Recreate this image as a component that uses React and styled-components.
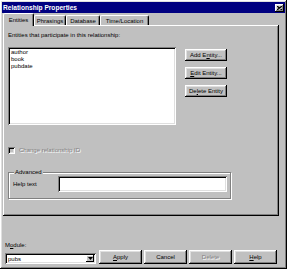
import React from 'react'
import styled, { createGlobalStyle } from 'styled-components'

const GlobalStyle = createGlobalStyle`
  html, body {
    margin: 0;
    padding: 0;
    background: #c0c0c0;
  }
  body {
    font-family: "Liberation Sans", Arial, sans-serif;
    font-size: 6px;
    color: #000;
  }
`

const raised = `
  box-shadow: inset -1px -1px #000, inset 1px 1px #fff,
    inset -2px -2px #808080, inset 2px 2px #dfdfdf;
`

const sunken = `
  box-shadow: inset 1px 1px #808080, inset -1px -1px #fff,
    inset 2px 2px #000, inset -2px -2px #dfdfdf;
`

const Window = styled.div`
  width: 287px;
  height: 269px;
  box-sizing: border-box;
  padding: 2px;
  background: #c0c0c0;
  display: flex;
  flex-direction: column;
  ${raised}
`

const TitleBar = styled.div`
  height: 11px;
  display: flex;
  align-items: center;
  justify-content: space-between;
  padding: 0 1px 0 1px;
  background: #000080;
  color: #fff;
  font-weight: bold;
  font-size: 6.6px;
`

const CloseBox = styled.div`
  width: 9px;
  height: 8px;
  box-sizing: border-box;
  background: #c0c0c0;
  display: flex;
  align-items: center;
  justify-content: center;
  ${raised}
`

const Body = styled.div`
  flex: 1;
  display: flex;
  flex-direction: column;
  padding: 0 0 3px 1px;
`

const TabRow = styled.div`
  height: 13px;
  display: flex;
  align-items: flex-end;
  position: relative;
  z-index: 1;
  margin-bottom: -1px;
`

const Tab = styled.div`
  width: ${p => p.width}px;
  height: ${p => (p.active ? 13 : 10)}px;
  margin-bottom: ${p => (p.active ? 0 : 1)}px;
  box-sizing: border-box;
  display: flex;
  align-items: center;
  justify-content: center;
  background: #c0c0c0;
  border-top: 1px solid #fff;
  border-left: 1px solid #fff;
  border-right: 1px solid #000;
  border-radius: 2px 2px 0 0;
  box-shadow: inset -1px 0 #808080;
  position: relative;
  z-index: ${p => (p.active ? 2 : 1)};
`

const Panel = styled.div`
  width: 276px;
  height: 191px;
  box-sizing: border-box;
  padding: 6px 5px;
  background: #c0c0c0;
  display: flex;
  flex-direction: column;
  box-shadow: inset -1px -1px #000, inset 1px 1px #fff, inset -2px -2px #808080;
`

const Prompt = styled.div`
  line-height: 9px;
  margin-bottom: 7px;
`

const ListRow = styled.div`
  display: flex;
`

const ListBox = styled.div`
  width: 168px;
  height: 78px;
  box-sizing: border-box;
  padding: 2px 3px;
  background: #fff;
  line-height: 7px;
  ${sunken}
`

const ButtonColumn = styled.div`
  display: flex;
  flex-direction: column;
  gap: 6px;
  margin-left: 9px;
  padding-top: 2px;
`

const Button = styled.div`
  width: ${p => p.width || 42}px;
  height: ${p => p.height || 12}px;
  box-sizing: border-box;
  display: flex;
  align-items: center;
  justify-content: center;
  background: #c0c0c0;
  color: ${p => (p.disabled ? '#808080' : '#000')};
  text-shadow: ${p => (p.disabled ? '1px 1px 0 #fff' : 'none')};
  ${raised}
`

const CheckRow = styled.div`
  display: flex;
  align-items: center;
  margin-top: 21px;
  height: 8px;
`

const CheckBox = styled.div`
  width: 7px;
  height: 7px;
  box-sizing: border-box;
  background: #c0c0c0;
  ${sunken}
`

const DisabledText = styled.span`
  margin-left: 4px;
  color: #808080;
  text-shadow: 1px 1px 0 #fff;
`

const Group = styled.fieldset`
  width: 223px;
  height: 30px;
  box-sizing: border-box;
  margin: 15px 0 0 0;
  padding: 0 3px 4px 4px;
  border: 1px solid #808080;
  box-shadow: inset 1px 1px #fff, 1px 1px #fff;
  display: flex;
  align-items: center;
`

const Legend = styled.legend`
  padding: 0 1px;
  margin-left: 1px;
  line-height: 7px;
  background: #c0c0c0;
`

const Label = styled.span`
  flex: 1;
`

const TextField = styled.div`
  width: 169px;
  height: 16px;
  box-sizing: border-box;
  background: #fff;
  ${sunken}
`

const Footer = styled.div`
  margin-top: auto;
  display: flex;
  flex-direction: column;
  padding-left: 2px;
`

const FooterLabel = styled.div`
  line-height: 8px;
  margin-bottom: 1px;
`

const FooterRow = styled.div`
  display: flex;
  align-items: flex-end;
`

const Select = styled.div`
  width: 91px;
  height: 11px;
  box-sizing: border-box;
  padding: 2px;
  background: #fff;
  display: flex;
  align-items: center;
  justify-content: space-between;
  ${sunken}
`

const SelectText = styled.span`
  padding-left: 1px;
`

const DropButton = styled.div`
  width: 8px;
  height: 7px;
  box-sizing: border-box;
  background: #c0c0c0;
  display: flex;
  align-items: center;
  justify-content: center;
  box-shadow: inset -1px -1px #000, inset 1px 1px #fff;
`

const ButtonBar = styled.div`
  display: flex;
  gap: 2px;
  margin-left: 3px;
`

const tabs = [
  { label: 'Entities', width: 31, active: true },
  { label: 'Phrasings', width: 32 },
  { label: 'Database', width: 34 },
  { label: 'Time/Location', width: 49 },
]

const entities = ['author', 'book', 'pubdate']

const App = () => {
  return (
    <>
      <GlobalStyle />
      <Window>
        <TitleBar>
          <span>Relationship Properties</span>
          <CloseBox>
            <svg width="5" height="4" viewBox="0 0 5 4">
              <path d="M0 0 L5 4 M5 0 L0 4" stroke="#000" strokeWidth="1.2" />
            </svg>
          </CloseBox>
        </TitleBar>
        <Body>
          <TabRow>
            {tabs.map(t => (
              <Tab key={t.label} width={t.width} active={t.active}>
                {t.label}
              </Tab>
            ))}
          </TabRow>
          <Panel>
            <Prompt>Entities that participate in this relationship:</Prompt>
            <ListRow>
              <ListBox>
                {entities.map(e => (
                  <div key={e}>{e}</div>
                ))}
              </ListBox>
              <ButtonColumn>
                <Button>Add E<u>n</u>tity...</Button>
                <Button><u>E</u>dit Entity...</Button>
                <Button>De<u>l</u>ete Entity</Button>
              </ButtonColumn>
            </ListRow>
            <CheckRow>
              <CheckBox />
              <DisabledText>Change relationship ID</DisabledText>
            </CheckRow>
            <Group>
              <Legend>Advanced</Legend>
              <Label>Help text</Label>
              <TextField />
            </Group>
          </Panel>
          <Footer>
            <FooterLabel>M<u>o</u>dule:</FooterLabel>
            <FooterRow>
              <Select>
                <SelectText>pubs</SelectText>
                <DropButton>
                  <svg width="5" height="3" viewBox="0 0 5 3">
                    <path d="M0 0 L5 0 L2.5 3 Z" fill="#000" />
                  </svg>
                </DropButton>
              </Select>
              <ButtonBar>
                <Button width={43} height={14}><u>A</u>pply</Button>
                <Button width={43} height={14}>Cancel</Button>
                <Button width={43} height={14} disabled>Delete</Button>
                <Button width={43} height={14}><u>H</u>elp</Button>
              </ButtonBar>
            </FooterRow>
          </Footer>
        </Body>
      </Window>
    </>
  )
}

export default App
